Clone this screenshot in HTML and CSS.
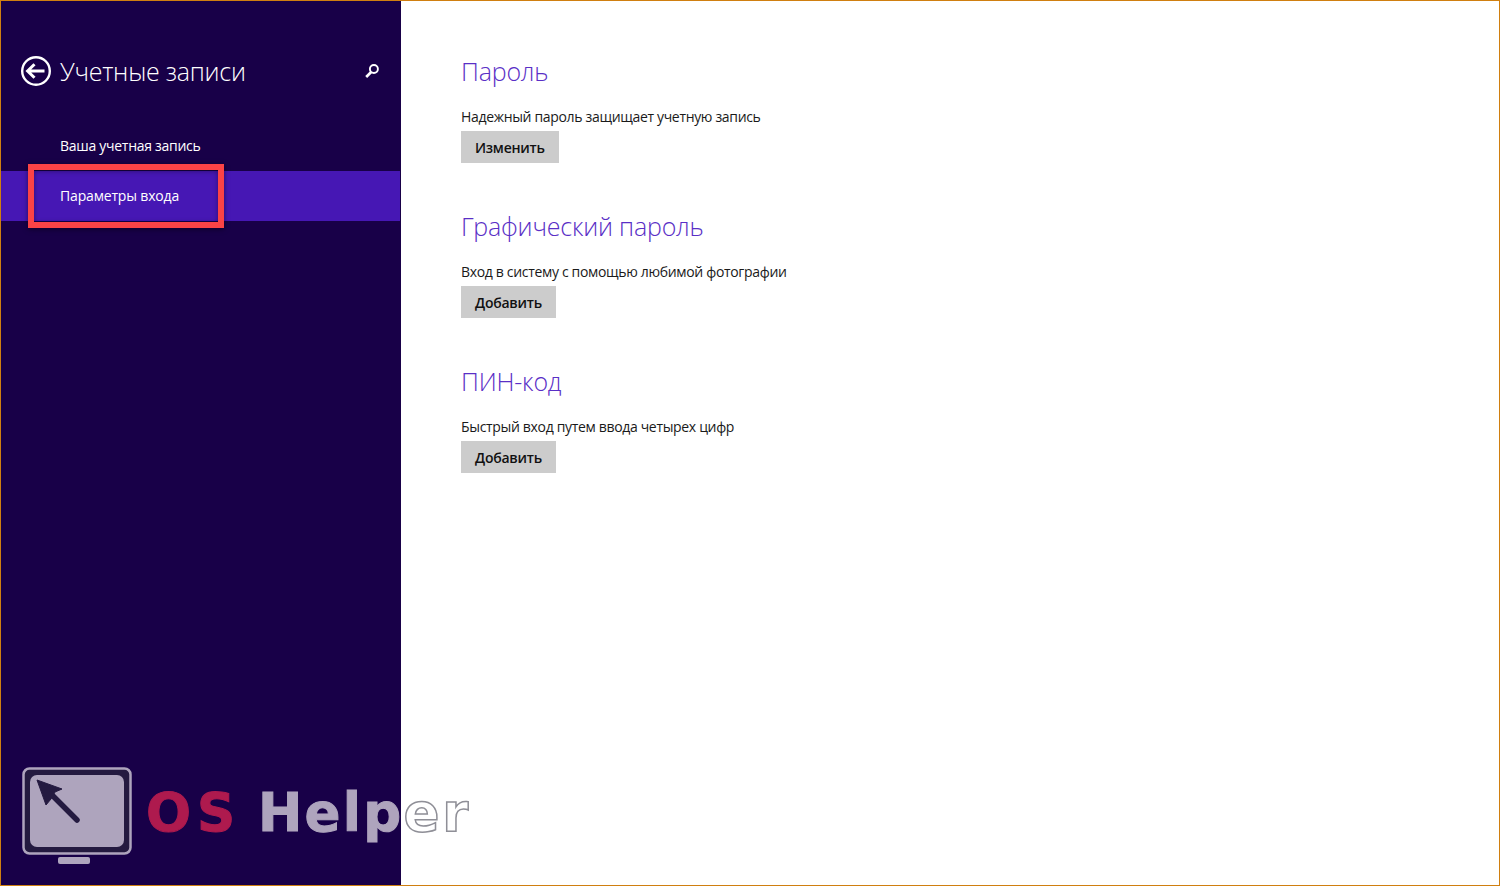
FILE: index.html
```html
<!DOCTYPE html>
<html lang="ru">

<head>
  <meta charset="UTF-8">
  <meta name="viewport" content="width=device-width, initial-scale=1.0">
  <title>Учетные записи</title>
  <link rel="stylesheet" href="styles.css">
</head>

<body>
  <div class="frame">
    <aside class="sidebar">
      <div class="sidebar-head">
        <svg class="back-icon" viewBox="0 0 32 32" width="32" height="32">
          <circle cx="16" cy="16" r="13.8" fill="none" stroke="#fff" stroke-width="2.4" />
          <path d="M7.5 16H24.5M14.5 9.2L7.6 16L14.5 22.8" fill="none" stroke="#fff" stroke-width="3" />
        </svg>
        <span class="sidebar-title">Учетные записи</span>
        <svg class="search-icon" viewBox="0 0 16 16" width="16" height="16">
          <circle cx="9.9" cy="6" r="4" fill="none" stroke="#fff" stroke-width="1.9" />
          <path d="M7.2 9L2.2 14" fill="none" stroke="#fff" stroke-width="2.6" />
        </svg>
      </div>

      <nav class="menu">
        <a class="menu-item">Ваша учетная запись</a>
        <a class="menu-item selected">Параметры входа</a>
      </nav>
    </aside>

    <main class="content">
      <section class="option">
        <h2>Пароль</h2>
        <p>Надежный пароль защищает учетную запись</p>
        <button>Изменить</button>
      </section>

      <section class="option">
        <h2>Графический пароль</h2>
        <p>Вход в систему с помощью любимой фотографии</p>
        <button>Добавить</button>
      </section>

      <section class="option">
        <h2>ПИН-код</h2>
        <p>Быстрый вход путем ввода четырех цифр</p>
        <button>Добавить</button>
      </section>
    </main>
  </div>

  <!-- красная рамка поверх пункта меню -->
  <div class="highlight"></div>

  <!-- водяной знак -->
  <div class="watermark">
    <svg class="watermark-icon" viewBox="0 0 110 98" width="110" height="98">
      <rect x="1.5" y="1.5" width="107" height="85" rx="6" fill="#241a40" stroke="#aea4bd" stroke-width="2.5" />
      <rect x="8" y="8" width="94" height="72" rx="7" fill="#aea4bd" />
      <rect x="36" y="90" width="32" height="7" rx="2" fill="#aea4bd" />
      <path d="M15 13L40 22L33 25L29 32L24 38Z" fill="#241a40" stroke="#241a40" stroke-width="1" stroke-linejoin="round" />
      <path d="M29 27L55 53" fill="none" stroke="#241a40" stroke-width="5.5" stroke-linecap="round" />
    </svg>
    <span class="watermark-text"><span class="wm-os">OS</span> <span class="wm-help">Help</span><span class="wm-er">er</span></span>
  </div>
</body>

</html>
```

FILE: styles.css
```css
/* Reset */
* {
  box-sizing: border-box;
}

body {
  margin: 0;
  padding: 0;
  width: 1500px;
  height: 886px;
  overflow: hidden;
  position: relative;
  background: #fff;
  font-family: 'Open Sans', 'Noto Sans', sans-serif;
}

.frame {
  display: flex;
  height: 100%;
  border: 1px solid #d07f10;
}

/* Левая колонка */
.sidebar {
  width: 400px;
  flex-shrink: 0;
  background: #180048;
  color: #fff;
}

.sidebar-head {
  display: flex;
  align-items: center;
  height: 32px;
  margin-top: 54px;
  padding: 0 21px 0 19px;
}

.back-icon {
  flex-shrink: 0;
}

.sidebar-title {
  flex: 1;
  margin-left: 8px;
  font-size: 25px;
  font-weight: 300;
  line-height: 32px;
  letter-spacing: -0.24px;
}

.search-icon {
  margin-top: -1px;
}

.menu {
  margin-top: 34px;
}

.menu-item {
  display: block;
  height: 50px;
  padding-left: 59px;
  font-size: 14px;
  line-height: 50px;
  letter-spacing: -0.28px;
  color: #fff;
}

.menu-item.selected {
  background: #4617b4;
  width: 399px;
  letter-spacing: -0.17px;
}

/* Контент */
.content {
  flex: 1;
  padding: 54px 60px 0;
}

.option {
  margin-bottom: 47px;
}

.option h2 {
  margin: 0;
  font-size: 25px;
  font-weight: 300;
  line-height: 32px;
  letter-spacing: -0.2px;
  color: #5a2fc6;
}

.option p {
  margin: 20px 0 4px;
  font-size: 14px;
  line-height: 20px;
  letter-spacing: -0.33px;
  color: #1a1a1a;
}

.option button {
  display: block;
  height: 32px;
  padding: 0 14px;
  border: 0;
  background: #ccc;
  font-family: inherit;
  font-size: 14px;
  font-weight: 600;
  letter-spacing: -0.24px;
  color: #111;
}

.highlight {
  position: absolute;
  left: 28px;
  top: 164px;
  width: 196px;
  height: 64px;
  border: 6px solid #fb4346;
  box-shadow: 0 1px 5px rgba(0, 0, 0, 0.5), inset 0 1px 5px rgba(0, 0, 0, 0.4);
}

.watermark {
  position: absolute;
  left: 22px;
  top: 767px;
  display: flex;
  align-items: flex-start;
}

.watermark-text {
  margin: 14px 0 0 14px;
  font-family: 'DejaVu Sans', sans-serif;
  font-size: 53px;
  font-weight: 700;
  line-height: 64px;
  letter-spacing: 2.75px;
  word-spacing: -4.5px;
  white-space: pre;
}

.wm-os {
  letter-spacing: 6px;
  color: #ae1a4e;
  -webkit-text-stroke: 1px #ae1a4e;
}

.wm-help {
  letter-spacing: 2.3px;
  color: #aea4bd;
  -webkit-text-stroke: 1px #aea4bd;
}

.wm-er {
  color: #fff;
  -webkit-text-stroke: 1.5px #8f8f97;
}
```
